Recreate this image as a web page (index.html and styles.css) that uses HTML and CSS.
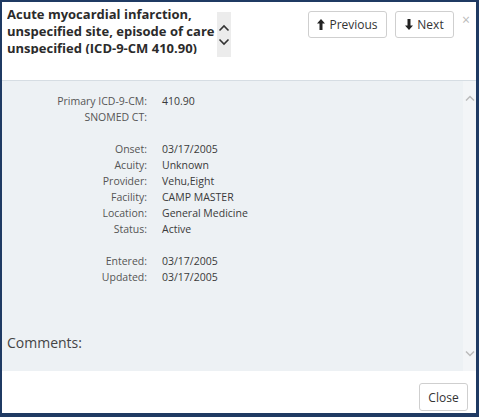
FILE: index.html
```html
<!DOCTYPE html>
<html>
<head>
<meta charset="utf-8">
<link rel="stylesheet" href="styles.css">
</head>
<body>
<div class="frame">
  <div class="header">
    <div class="title-wrap">
      <div class="title">Acute myocardial infarction, unspecified site, episode of care unspecified (ICD-9-CM 410.90)</div>
      <div class="title-scroll">
        <svg width="12" height="8" viewBox="0 0 12 8"><path d="M1.5 6.5 L6 2 L10.5 6.5" fill="none" stroke="#333" stroke-width="1.6"/></svg>
        <svg width="12" height="8" viewBox="0 0 12 8"><path d="M1.5 1.5 L6 6 L10.5 1.5" fill="none" stroke="#333" stroke-width="1.6"/></svg>
      </div>
    </div>
    <div class="actions">
      <button class="btn btn-prev"><svg class="ico" width="8" height="11" viewBox="0 0 8 11"><path d="M4 0 L8 4.5 L5.5 4.5 L5.5 11 L2.5 11 L2.5 4.5 L0 4.5 Z" fill="#222"/></svg>Previous</button>
      <button class="btn btn-next"><svg class="ico" width="8" height="11" viewBox="0 0 8 11"><path d="M4 11 L8 6.5 L5.5 6.5 L5.5 0 L2.5 0 L2.5 6.5 L0 6.5 Z" fill="#222"/></svg>Next</button>
      <span class="close-x">×</span>
    </div>
  </div>
  <div class="body">
    <div class="content">
      <div class="grid">
        <div class="lbl">Primary ICD-9-CM:</div><div class="val">410.90</div>
        <div class="lbl">SNOMED CT:</div><div class="val"></div>
        <div class="spacer"></div>
        <div class="lbl">Onset:</div><div class="val">03/17/2005</div>
        <div class="lbl">Acuity:</div><div class="val">Unknown</div>
        <div class="lbl">Provider:</div><div class="val">Vehu,Eight</div>
        <div class="lbl">Facility:</div><div class="val">CAMP MASTER</div>
        <div class="lbl">Location:</div><div class="val">General Medicine</div>
        <div class="lbl">Status:</div><div class="val">Active</div>
        <div class="spacer"></div>
        <div class="lbl">Entered:</div><div class="val">03/17/2005</div>
        <div class="lbl">Updated:</div><div class="val">03/17/2005</div>
      </div>
      <div class="comments">Comments:</div>
    </div>
    <div class="scrollbar">
      <svg width="10" height="7" viewBox="0 0 10 7"><path d="M1 5.5 L5 1.5 L9 5.5" fill="none" stroke="#bbb" stroke-width="1.5"/></svg>
      <svg width="10" height="7" viewBox="0 0 10 7"><path d="M1 1.5 L5 5.5 L9 1.5" fill="none" stroke="#bbb" stroke-width="1.5"/></svg>
    </div>
  </div>
  <div class="footer">
    <button class="btn close-btn">Close</button>
  </div>
</div>
</body>
</html>
```
FILE: styles.css
```css
html, body {
  margin: 0;
  padding: 0;
  background: #1f3a63;
}
.frame {
  box-sizing: border-box;
  width: 479px;
  height: 417px;
  border-style: solid;
  border-color: #1f3a63;
  border-width: 2px 3px 4px 2px;
  background: #fff;
  display: flex;
  flex-direction: column;
  font-family: "Open Sans", "Liberation Sans", sans-serif;
  color: #333;
}
.header {
  height: 78px;
  border-bottom: 1px solid #d6dde3;
  display: flex;
  justify-content: space-between;
  align-items: flex-start;
  background: #fff;
}
.title-wrap {
  display: flex;
  align-items: flex-start;
  padding: 4px 0 0 5px;
}
.title {
  width: 208px;
  height: 48px;
  overflow: hidden;
  font-size: 13px;
  font-weight: 700;
  line-height: 17px;
  color: #2b2b2b;
}
.title-scroll {
  width: 14px;
  height: 45px;
  margin: 6px 0 0 2px;
  background: #ececec;
  display: flex;
  flex-direction: column;
  align-items: center;
  justify-content: center;
  gap: 6px;
}
.actions {
  display: flex;
  align-items: flex-start;
  gap: 8px;
  padding: 9px 0 0 0;
}
.btn {
  box-sizing: border-box;
  height: 27px;
  padding: 0;
  border: 1px solid #cfcfcf;
  border-radius: 3px;
  background: #fff;
  font-family: "Open Sans", "Liberation Sans", sans-serif;
  font-size: 12px;
  color: #333;
  display: flex;
  align-items: center;
  justify-content: center;
  gap: 4px;
}
.ico {
  flex-shrink: 0;
}
.btn-prev { width: 79px; }
.btn-next { width: 59px; }
.close-x {
  color: #bbb;
  font-size: 14px;
  line-height: 14px;
  margin: 2px 0 0 0;
  width: 14px;
}
.body {
  flex: 1;
  display: flex;
  background: #edf1f4;
  min-height: 0;
}
.content {
  flex: 1;
  padding-top: 12px;
}
.grid {
  display: grid;
  grid-template-columns: 145px 1fr;
  column-gap: 15px;
  font-size: 10.5px;
  line-height: 16px;
}
.lbl {
  text-align: right;
  color: #555;
}
.val {
  color: #3a3a3a;
}
.spacer {
  grid-column: 1 / 3;
  height: 16px;
}
.comments {
  margin: 48px 0 0 5px;
  font-size: 14px;
  line-height: 20px;
  color: #444;
}
.scrollbar {
  width: 13px;
  background: #f3f5f7;
  display: flex;
  flex-direction: column;
  justify-content: space-between;
  align-items: center;
  padding: 14px 0 14px 0;
}
.footer {
  flex: 0 0 42px;
  display: flex;
  justify-content: flex-end;
  align-items: flex-start;
  padding: 12px 8px 0 0;
  box-sizing: border-box;
  background: #fff;
}
.close-btn {
  width: 49px;
  height: 28px;
}
```
